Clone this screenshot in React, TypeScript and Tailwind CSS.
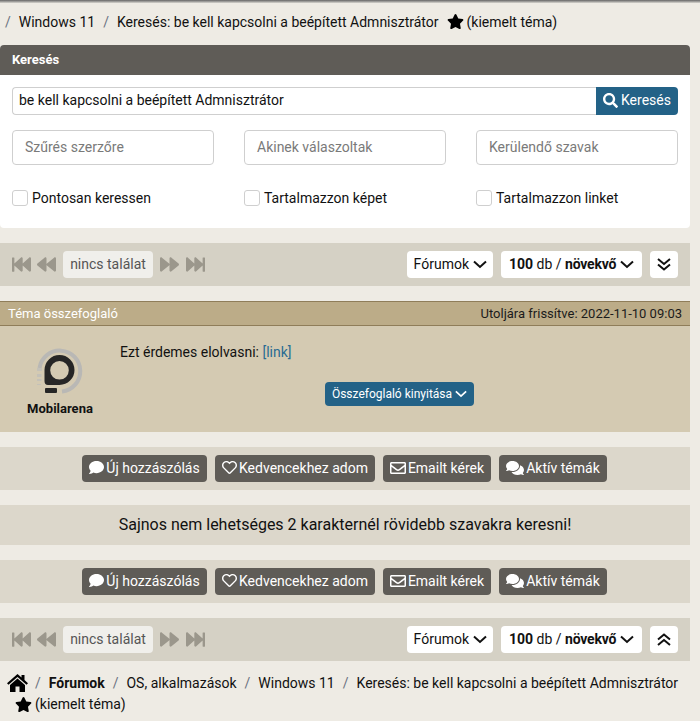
import {
  FaBackward,
  FaComment,
  FaComments,
  FaFastBackward,
  FaFastForward,
  FaForward,
  FaRegEnvelope,
  FaRegHeart,
  FaSearch,
  FaStar,
} from "react-icons/fa";

function Slash() {
  return <span className="mx-[8px] text-[#6b7280]">/</span>;
}

function Chevron({ small }: { small?: boolean }) {
  return (
    <svg width={small ? 12 : 14} height={small ? 8 : 9} viewBox="0 0 14 9" fill="none" stroke="currentColor" strokeWidth="2">
      <path d="M1 1.500 L7 7 L13 1.500" />
    </svg>
  );
}

function DoubleChevron({ up }: { up?: boolean }) {
  return (
    <svg width="14" height="13" viewBox="0 0 14 13" fill="none" stroke="currentColor" strokeWidth="2">
      {up ? (
        <path d="M1 6.500 L7 1.500 L13 6.500 M1 12 L7 7 L13 12" />
      ) : (
        <path d="M1 1 L7 6 L13 1 M1 6.500 L7 11.500 L13 6.500" />
      )}
    </svg>
  );
}

function HomeIcon() {
  return (
    <svg width="21" height="18" viewBox="0 0 21 18" fill="black">
      <path d="M10.500 0 L14.500 3.500 L14.500 1 L17.500 1 L17.500 6 L21 9.200 L19.500 10.800 L10.500 3 L1.500 10.800 L0 9.200 Z" />
      <path d="M10.500 4.500 L18 11 L18 18 L12.500 18 L12.500 12.500 L8.500 12.500 L8.500 18 L3 18 L3 11 Z" />
    </svg>
  );
}

function Pager({ up }: { up?: boolean }) {
  return (
    <div className="flex h-[43px] w-[690px] items-center justify-between bg-[#d5d1c5] px-3">
      <div className="flex items-center">
        <div className="flex items-center gap-[6px] text-[19px] text-[#9b978c]">
          <FaFastBackward />
          <FaBackward />
        </div>
        <div className="mx-[7px] flex h-[27px] w-[90px] items-center justify-center rounded bg-[#f0efeb] pb-[2px] text-[#555]">
          nincs találat
        </div>
        <div className="flex items-center gap-[7px] text-[19px] text-[#9b978c]">
          <FaForward />
          <FaFastForward />
        </div>
      </div>
      <div className="flex items-center">
        <div className="flex h-[27px] items-center gap-1 rounded bg-white pb-[2px] pl-[7px] pr-[6px] text-[#111]">
          Fórumok <span className="pt-[2px]"><Chevron /></span>
        </div>
        <div className="ml-2 flex h-[27px] w-[141px] items-center justify-between rounded bg-white pb-[2px] pl-2 pr-2 text-[#111]">
          <span>
            <b>100</b> db / <b className="tracking-[-0.2px]">növekvő</b>
          </span>
          <span className="pt-[2px]"><Chevron /></span>
        </div>
        <div className="ml-2 flex h-[27px] w-7 items-center justify-center rounded bg-white text-[#111]">
          <DoubleChevron up={up} />
        </div>
      </div>
    </div>
  );
}

function ActionBar() {
  const buttons = [
    { label: "Új hozzászólás", width: "w-[125px]", icon: <FaComment className="text-[15px]" /> },
    { label: "Kedvencekhez adom", width: "w-[160px]", icon: <FaRegHeart className="text-[15px]" /> },
    { label: "Emailt kérek", width: "w-[108px]", icon: <FaRegEnvelope className="text-[16px]" /> },
    { label: "Aktív témák", width: "w-[108px]", icon: <FaComments className="text-[18px]" /> },
  ];
  return (
    <div className="flex h-[43px] w-[690px] items-center justify-center gap-2 bg-[#dcd7cb] pr-px">
      {buttons.map((b) => (
        <div key={b.label} className={`flex h-[27px] items-center justify-center gap-[2px] rounded bg-[#5f5c57] pb-[2px] text-white ${b.width}`}>
          {b.icon}
          {b.label}
        </div>
      ))}
    </div>
  );
}

function Logo() {
  return (
    <svg width="46" height="46" viewBox="0 0 46 46">
      <path d="M2.500 20 A20.500 20.500 0 1 1 25 43.500" fill="none" stroke="#b9b8b5" strokeWidth="4" />
      <path
        fillRule="evenodd"
        d="M7.500 22 A15 15 0 1 1 22.500 37 L11 37 Q7.500 37 7.500 33 Z M22.500 13 A9.300 9.300 0 1 0 22.500 31.600 A9.300 9.300 0 1 0 22.500 13 Z"
        fill="#262626"
      />
      <rect x="8" y="40" width="12" height="5" rx="1" fill="#262626" />
      <rect x="0" y="20" width="5" height="3" fill="#c4c1b8" />
      <rect x="0" y="26" width="4.500" height="3" fill="#c4c1b8" />
      <rect x="0" y="31" width="4.500" height="2" fill="#c4c1b8" />
      <rect x="0" y="36" width="4" height="1" fill="#c4c1b8" />
    </svg>
  );
}

export default function App() {
  return (
    <div className="h-[721px] w-[700px] overflow-hidden bg-[#eeebe4] font-['Roboto',sans-serif] text-[14px] leading-5 text-[#111]">
      <div className="h-[3px] bg-gradient-to-b from-[#666] to-[#d8d6d0]" />

      <div className="flex h-[42px] items-center whitespace-nowrap pb-[5px] pl-[5px]">
        <span className="mr-[8px] text-[#6b7280]">/</span>
        <span>Windows 11</span>
        <Slash />
        <span>Keresés: be kell kapcsolni a beépített Admnisztrátor</span>
        <FaStar className="ml-[8px] mr-[3px] text-[17px] text-black" />
        <span>(kiemelt téma)</span>
      </div>

      <div className="h-[183px] w-[690px] overflow-hidden rounded bg-white">
        <div className="flex h-[30px] items-center bg-[#5f5c57] pl-3 text-[13px] font-bold text-white">Keresés</div>
        <div className="px-3 pt-3">
          <div className="flex h-[28px]">
            <div className="flex flex-1 items-center rounded-l border border-r-0 border-[#cfcfcf] pb-[2px] pl-[6px]">
              be kell kapcsolni a beépített Admnisztrátor
            </div>
            <div className="flex w-[82px] items-center justify-center gap-[3px] rounded-r bg-[#236287] pb-[2px] text-white">
              <FaSearch className="text-[15px]" />
              Keresés
            </div>
          </div>
          <div className="mt-[15px] grid grid-cols-3 gap-[30px]">
            {["Szűrés szerzőre", "Akinek válaszoltak", "Kerülendő szavak"].map((p) => (
              <div key={p} className="flex h-[35px] items-center rounded border border-[#cfcfcf] pb-[2px] pl-3 text-[#7a7a7a]">
                {p}
              </div>
            ))}
          </div>
          <div className="mt-[23px] grid grid-cols-3 gap-[30px]">
            {["Pontosan keressen", "Tartalmazzon képet", "Tartalmazzon linket"].map((l) => (
              <div key={l} className="flex items-center gap-1">
                <span className="h-4 w-4 rounded-[3px] border border-[#cfcfcf] bg-white" />
                {l}
              </div>
            ))}
          </div>
        </div>
      </div>

      <div className="mt-[15px]">
        <Pager />
      </div>

      <div className="mt-[15px] w-[690px] bg-[#d4cab2]">
        <div className="flex h-[25px] items-center justify-between border-y border-[#8f7d59] bg-[#bcac88] px-2 text-[13px]">
          <span className="text-white">Téma összefoglaló</span>
          <span className="text-[#1b1b1b]">Utoljára frissítve: 2022-11-10 09:03</span>
        </div>
        <div className="flex h-[106px]">
          <div className="flex w-[120px] flex-col items-center pt-[22px]">
            <Logo />
            <div className="mt-[5px] text-[13px] font-bold">Mobilarena</div>
          </div>
          <div className="flex-1 pt-[16px]">
            <div>
              Ezt érdemes elolvasni: <span className="text-[#2a6c92]">[link]</span>
            </div>
            <div className="mt-[20px] flex justify-center pr-[11px]">
              <div className="flex h-6 items-center gap-[3px] rounded bg-[#236287] px-[7px] text-[12px] text-white">
                Összefoglaló kinyitása <Chevron small />
              </div>
            </div>
          </div>
        </div>
      </div>

      <div className="mt-[15px]">
        <ActionBar />
      </div>

      <div className="mt-[15px] flex h-[40px] w-[690px] items-center justify-center bg-[#dcd7cb] text-[16px]">
        Sajnos nem lehetséges 2 karakternél rövidebb szavakra keresni!
      </div>

      <div className="mt-[15px]">
        <ActionBar />
      </div>

      <div className="mt-[15px]">
        <Pager up />
      </div>

      <div className="w-[690px] pl-[7px] pt-[11px] leading-[21px]">
        <div className="flex h-[22px] items-center whitespace-nowrap">
          <HomeIcon />
          <span className="ml-[7px] mr-[8px] text-[#6b7280]">/</span>
          <b>Fórumok</b>
          <Slash />
          <span>OS, alkalmazások</span>
          <Slash />
          <span>Windows 11</span>
          <Slash />
          <span>Keresés: be kell kapcsolni a beépített Admnisztrátor</span>
        </div>
        <div className="flex items-center pl-[8px]">
          <FaStar className="mr-[3px] text-[17px] text-black" />
          <span>(kiemelt téma)</span>
        </div>
      </div>
    </div>
  );
}
